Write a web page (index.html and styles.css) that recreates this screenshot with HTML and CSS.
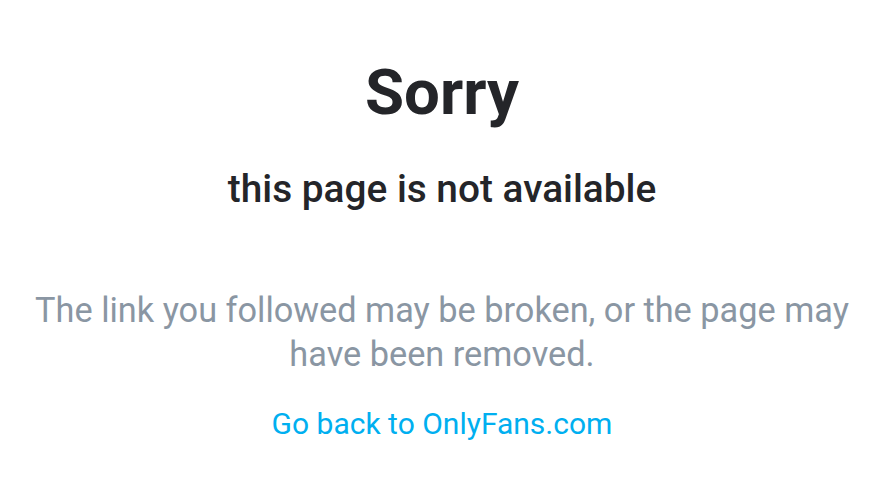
FILE: index.html
```html
<!DOCTYPE html>
<html>
<head>
<meta charset="utf-8">
<link rel="stylesheet" href="styles.css">
</head>
<body>
<main class="page">
  <h1 class="title">Sorry</h1>
  <h2 class="subtitle">this page is not available</h2>
  <p class="text">The link you followed may be broken, or the page may have been removed.</p>
  <a class="link" href="#">Go back to OnlyFans.com</a>
</main>
</body>
</html>
```
FILE: styles.css
```css
html, body {
  margin: 0;
  padding: 0;
  background: #ffffff;
}
body {
  font-family: Roboto, "Liberation Sans", sans-serif;
}
.page {
  display: flex;
  flex-direction: column;
  align-items: center;
  text-align: center;
  padding: 55px 20px 0;
}
.title {
  margin: 0;
  font-size: 63.5px;
  line-height: 76px;
  font-weight: 700;
  color: #242529;
}
.subtitle {
  margin: 34px 0 0;
  font-size: 38.8px;
  line-height: 48px;
  font-weight: 500;
  color: #242529;
}
.text {
  margin: 75px 0 0;
  font-size: 34.3px;
  line-height: 44px;
  color: #8a96a3;
}
.link {
  margin-top: 28px;
  font-size: 30px;
  line-height: 40px;
  color: #00aff0;
  text-decoration: none;
}
```
